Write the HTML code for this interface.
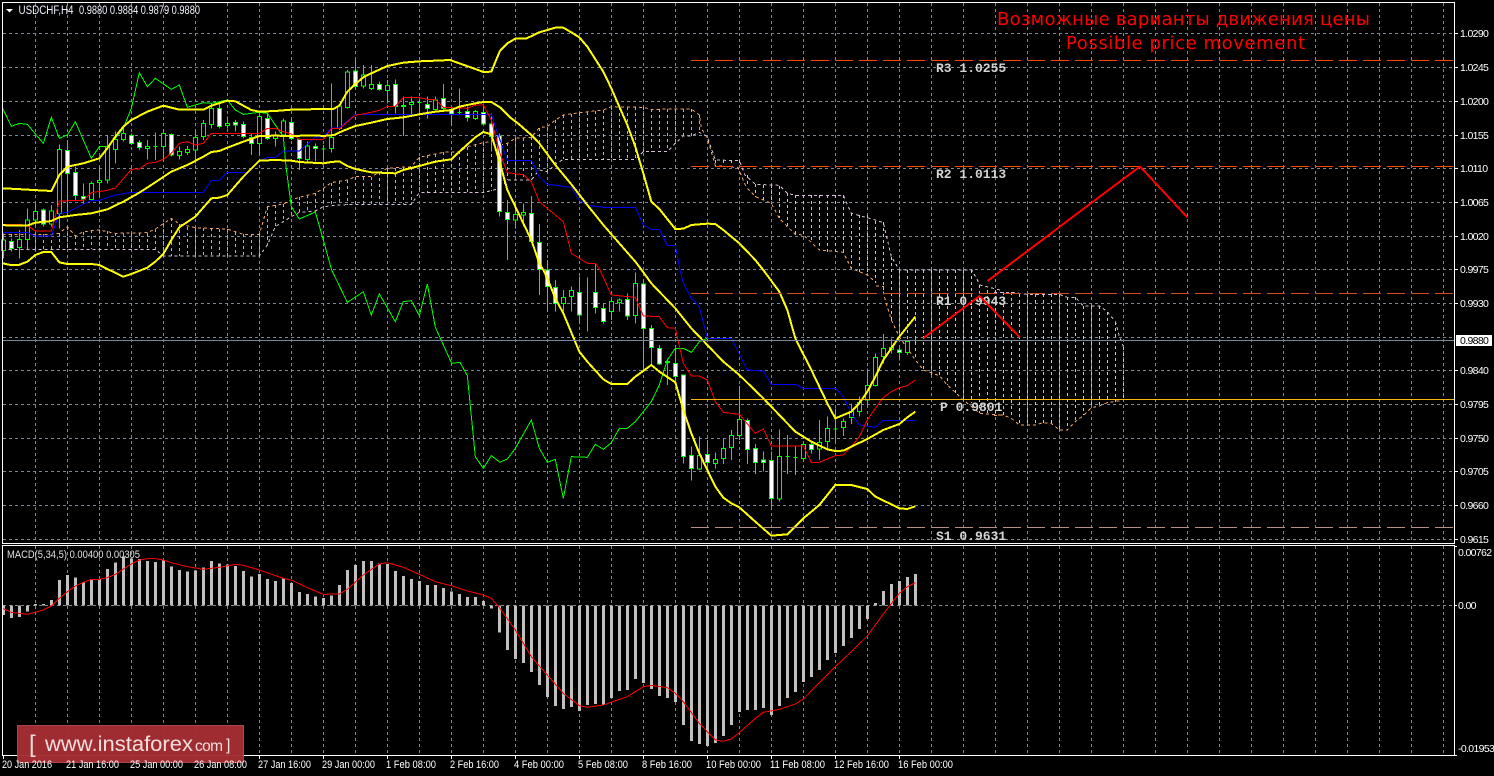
<!DOCTYPE html>
<html><head><meta charset="utf-8"><title>USDCHF,H4</title>
<style>
html,body{margin:0;padding:0;background:#000;width:1494px;height:776px;overflow:hidden}
svg{display:block;position:absolute;left:0;top:0}
path{vector-effect:non-scaling-stroke;shape-rendering:crispEdges;fill:none}
.ax{font:10.5px "Liberation Sans",sans-serif;fill:#fff;letter-spacing:-.65px}
.dt{font:11px "Liberation Sans",sans-serif;fill:#fff}
.lv{font:bold 13px "Liberation Mono",monospace;fill:#d4d4d4}
.y{stroke:#ff0;stroke-width:2}
.r{stroke:#f00;stroke-width:1}
.b{stroke:#00f;stroke-width:1}
.g{stroke:#0f0;stroke-width:1}
.sa{stroke:#f4a460;stroke-width:1;stroke-dasharray:3 3}
.ti{stroke:#d8bfd8;stroke-width:1;stroke-dasharray:3 3}
</style></head><body>
<svg width="1494" height="776" viewBox="0 0 1494 776" xmlns="http://www.w3.org/2000/svg">
<rect width="1494" height="776" fill="#000"/>

<!-- grid -->
<path stroke="#778899" stroke-dasharray="3 3" d="M3 33.5H1454M3 67.5H1454M3 101.5H1454M3 135.5H1454M3 168.5H1454M3 202.5H1454M3 236.5H1454M3 269.5H1454M3 303.5H1454M3 337.5H1454M3 370.5H1454M3 404.5H1454M3 438.5H1454M3 471.5H1454M3 505.5H1454M3 539.5H1454"/>
<path stroke="#778899" stroke-dasharray="3 3" d="M35.5 3V543M67.5 3V543M99.5 3V543M131.5 3V543M163.5 3V543M195.5 3V543M227.5 3V543M259.5 3V543M291.5 3V543M323.5 3V543M355.5 3V543M387.5 3V543M419.5 3V543M451.5 3V543M483.5 3V543M515.5 3V543M547.5 3V543M579.5 3V543M611.5 3V543M643.5 3V543M675.5 3V543M707.5 3V543M739.5 3V543M771.5 3V543M803.5 3V543M835.5 3V543M867.5 3V543M899.5 3V543M931.5 3V543M963.5 3V543M995.5 3V543M1027.5 3V543M1059.5 3V543M1091.5 3V543M1123.5 3V543M1155.5 3V543M1187.5 3V543M1219.5 3V543M1251.5 3V543M1283.5 3V543M1315.5 3V543M1347.5 3V543M1379.5 3V543M1411.5 3V543M1443.5 3V543"/>
<path stroke="#778899" stroke-dasharray="3 3" d="M35.5 546V755M67.5 546V755M99.5 546V755M131.5 546V755M163.5 546V755M195.5 546V755M227.5 546V755M259.5 546V755M291.5 546V755M323.5 546V755M355.5 546V755M387.5 546V755M419.5 546V755M451.5 546V755M483.5 546V755M515.5 546V755M547.5 546V755M579.5 546V755M611.5 546V755M643.5 546V755M675.5 546V755M707.5 546V755M739.5 546V755M771.5 546V755M803.5 546V755M835.5 546V755M867.5 546V755M899.5 546V755M931.5 546V755M963.5 546V755M995.5 546V755M1027.5 546V755M1059.5 546V755M1091.5 546V755M1123.5 546V755M1155.5 546V755M1187.5 546V755M1219.5 546V755M1251.5 546V755M1283.5 546V755M1315.5 546V755M1347.5 546V755M1379.5 546V755M1411.5 546V755M1443.5 546V755"/>
<path stroke="#778899" stroke-dasharray="3 3" d="M3 605.5H1454"/>

<!-- cloud hatching, first part -->
<path class="sa" d="M3.5 234V249M11.5 234V249M19.5 234V249M27.5 234V249M35.5 234V249M43.5 234V249M51.5 234V249M59.5 233V249M67.5 227V249M75.5 236V249M83.5 232V249M91.5 230V249M99.5 230V249M107.5 231V249M115.5 233V249M123.5 233V249M131.5 233V249M139.5 233V249M147.5 233V249M155.5 229V249M163.5 223V256M171.5 218V256M179.5 224V256M187.5 227V256M195.5 228V256M203.5 228V256M211.5 228V256M219.5 229V256M227.5 229V256M235.5 232V256M243.5 234V256M251.5 234V256M259.5 234V256M267.5 207V245M275.5 205V227M283.5 204V222M291.5 200V217M299.5 197V212M307.5 195V212M315.5 193V211M323.5 188V207M331.5 183V206M339.5 181V205M347.5 180V205M355.5 177V204M363.5 177V204M371.5 177V204M379.5 172V204M387.5 168V204M395.5 168V204M403.5 167V204M411.5 167V204M419.5 157V193M427.5 155V193M435.5 154V193M443.5 152V193M451.5 152V193M459.5 151V193M467.5 147V193M475.5 144V193M483.5 143V193M491.5 142V191M499.5 145V188M507.5 143V180M515.5 138V180M523.5 138V180M531.5 137V180M539.5 128V170M547.5 127V172M555.5 120V163M563.5 115V159M571.5 114V159M579.5 113V159M587.5 112V159M595.5 111V159M603.5 110V159M611.5 107V159M619.5 107V159M627.5 107V159M635.5 107V159M643.5 107V152M651.5 109V152M659.5 109V152M667.5 109V151M675.5 109V143M683.5 109V136M691.5 109V136M699.5 115V132"/>
<!-- cloud hatching, second part -->
<path class="ti" d="M715.5 160V166M723.5 160V166M731.5 160V167M739.5 160V167M747.5 175V187M755.5 184V197M763.5 185V200M771.5 185V204M779.5 186V218M787.5 193V227M795.5 195V234M803.5 195V235M811.5 195V243M819.5 195V250M827.5 195V252M835.5 195V252M843.5 195V252M851.5 213V268M859.5 215V272M867.5 215V275M875.5 221V283M883.5 222V290M891.5 257V320M899.5 270V337M907.5 270V347M915.5 270V360M923.5 270V370M931.5 270V375M939.5 270V376M947.5 270V385M955.5 270V393M963.5 270V400M971.5 270V403M979.5 285V413M987.5 290V414M995.5 290V415M1003.5 292V415M1011.5 292V418M1019.5 294V425M1027.5 294V425M1035.5 294V425M1043.5 294V423M1051.5 294V423M1059.5 294V430M1067.5 297V430M1075.5 297V422M1083.5 306V415M1091.5 306V408M1099.5 306V406M1107.5 312V403M1115.5 322V402M1123.5 347V400"/>
<!-- cloud edges -->
<g transform="scale(.33333)">
<path class="sa" d="M8 703L154 703L178 700L202 680L226 708L250 695L298 690L346 700L442 698L466 687L514 655L538 672L586 683L634 685L682 687L730 703L778 703L802 620L850 612L874 600L898 592L946 580L970 565L994 548L1042 540L1066 530L1114 530L1162 505L1186 503L1234 500L1258 472L1306 462L1330 457L1378 455L1402 440L1450 428L1474 425L1500 435"/>
<path class="ti" d="M8 748L466 748L490 768L778 768L802 735L826 680L874 650L898 637L946 633L970 620L1018 615L1066 613L1234 613L1258 578L1450 578L1500 565"/>
</g>
<g transform="translate(500,0) scale(.33333)">
<path class="sa" d="M0 435L22 430L46 415L94 412L118 383L142 380L166 360L190 345L238 338L310 330L334 320L430 322L454 328L574 327L598 345L604 385L622 415L646 497L714 503L738 560L766 590L814 610L838 655L862 680L886 703L910 705L958 750L1030 757L1054 805L1102 825L1128 848"/>
<path class="ti" d="M0 565L22 540L94 540L118 510L142 515L170 490L190 478L406 478L430 455L502 455L526 430L550 408L574 408L598 397L622 410L646 480L718 482L735 525L766 553L838 556L862 580L886 586L1030 586L1054 640L1126 660L1150 668L1174 770L1198 810L1416 810L1440 855L1500 870"/>
</g>
<g transform="translate(500,270) scale(.33333)">
<path class="sa" d="M1128 48L1150 50L1150 70L1174 150L1198 200L1246 270L1270 300L1318 317L1342 345L1390 390L1440 430L1500 435"/>
</g>
<g transform="translate(994,270) scale(.33333)">
<path class="sa" d="M0 437L28 435L52 445L76 465L124 465L148 458L172 460L196 480L220 480L244 455L268 437L292 413L316 408L340 398L378 392"/>
<path class="ti" d="M0 67L52 67L100 73L196 73L220 82L244 82L268 108L316 108L340 125L364 155L375 195L388 230"/>
</g>

<!-- candles, first part -->
<g transform="scale(1,.33333)">
<path stroke="#0f0" d="M3.5 700V775M11.5 715V755M19.5 690V775M27.5 625V740M35.5 610V680M43.5 625V680M51.5 615V680M59.5 433V685M67.5 420V640M75.5 500V600M83.5 550V610M91.5 545V600M99.5 500V590M107.5 405V550M115.5 395V490M123.5 375V425M131.5 400V435M139.5 420V450M147.5 420V478M155.5 398V480M163.5 390V480M171.5 400V470M179.5 440V478M187.5 438V465M195.5 395V490M203.5 360V420M211.5 310V385M219.5 310V385M227.5 350V385M235.5 360V395M243.5 365V415M251.5 400V465M259.5 340V465M267.5 340V420M275.5 395V440M283.5 355V420M291.5 355V420M299.5 415V510M307.5 425V485M315.5 430V485M323.5 435V480M331.5 250V458M339.5 318V390M347.5 210V325M355.5 180V265M363.5 195V265M371.5 195V270M379.5 245V272M387.5 240V310M395.5 238V340M403.5 290V408M411.5 290V350M419.5 295V340M427.5 290V355M435.5 290V330M443.5 252V330M451.5 320V375M459.5 265V345M467.5 320V365M475.5 330V360M483.5 310V375M491.5 340V455M499.5 400V650M507.5 600V780M515.5 610V685M523.5 610V680M531.5 588V725M539.5 672V885M547.5 780V933"/>
<path fill="#000" stroke="#0f0" style="fill:#000" d="M1.5 720h4V752h-4zM17.5 718h4V743h-4zM25.5 660h4V718h-4zM33.5 635h4V660h-4zM49.5 633h4V672h-4zM57.5 448h4V640h-4zM89.5 550h4V598h-4zM97.5 541h4V548h-4zM105.5 440h4V540h-4zM113.5 418h4V448h-4zM121.5 400h4V418h-4zM145.5 440h4V445h-4zM153.5 440h4V440h-4zM161.5 400h4V440h-4zM177.5 454h4V467h-4zM185.5 448h4V458h-4zM193.5 412h4V450h-4zM201.5 370h4V410h-4zM209.5 325h4V373h-4zM225.5 370h4V376h-4zM257.5 350h4V430h-4zM273.5 408h4V415h-4zM281.5 363h4V405h-4zM305.5 438h4V478h-4zM321.5 447h4V447h-4zM329.5 412h4V445h-4zM337.5 318h4V385h-4zM345.5 216h4V322h-4zM361.5 225h4V258h-4zM369.5 253h4V266h-4zM385.5 256h4V272h-4zM401.5 316h4V320h-4zM409.5 307h4V314h-4zM417.5 308h4V308h-4zM433.5 300h4V328h-4zM457.5 338h4V338h-4zM473.5 335h4V356h-4zM513.5 643h4V660h-4zM521.5 637h4V645h-4z"/>
<path stroke="#0f0" style="fill:#fff" d="M9.5 725h4V745h-4zM41.5 630h4V672h-4zM65.5 452h4V520h-4zM73.5 517h4V587h-4zM81.5 590h4V597h-4zM129.5 406h4V430h-4zM137.5 427h4V442h-4zM169.5 403h4V465h-4zM217.5 325h4V380h-4zM233.5 368h4V375h-4zM241.5 373h4V410h-4zM249.5 412h4V430h-4zM265.5 355h4V415h-4zM289.5 367h4V415h-4zM297.5 418h4V475h-4zM313.5 440h4V445h-4zM353.5 213h4V260h-4zM377.5 253h4V268h-4zM393.5 253h4V320h-4zM425.5 313h4V325h-4zM441.5 295h4V325h-4zM449.5 328h4V342h-4zM465.5 335h4V352h-4zM481.5 338h4V372h-4zM489.5 372h4V410h-4zM497.5 408h4V635h-4zM505.5 638h4V658h-4zM529.5 640h4V725h-4zM537.5 727h4V808h-4zM545.5 810h4V860h-4z"/>
</g>
<!-- candles, second part -->
<g transform="translate(0,270) scale(1,.33333)">
<path stroke="#0f0" d="M555.5 30V125M563.5 60V125M571.5 50V125M579.5 20V160M587.5 22V185M595.5 -20V130M603.5 100V160M611.5 90V150M619.5 85V125M627.5 70V150M635.5 8V160M643.5 30V300M651.5 165V285M659.5 225V285M667.5 265V345M675.5 235V345M683.5 315V580M691.5 530V632M699.5 500V600M707.5 510V595M715.5 548V595M723.5 505V582M731.5 480V570M739.5 348V510M747.5 445V582M755.5 522V612M763.5 545V605M771.5 545V712M779.5 478V695M787.5 495V612M795.5 530V615M803.5 520V570M811.5 518V550M819.5 450V570M827.5 440V540M835.5 415V515M843.5 445V498M851.5 400V462M859.5 380V440M867.5 295V410M875.5 250V350M883.5 192V280M891.5 205V250M899.5 225V272M907.5 210V255M915.5 205V216"/>
<path stroke="#0f0" style="fill:#000" d="M561.5 82h4V100h-4zM569.5 62h4V80h-4zM609.5 95h4V125h-4zM617.5 90h4V98h-4zM633.5 40h4V137h-4zM665.5 275h4V278h-4zM697.5 556h4V597h-4zM713.5 568h4V581h-4zM721.5 535h4V566h-4zM729.5 497h4V532h-4zM737.5 448h4V497h-4zM777.5 560h4V687h-4zM785.5 560h4V560h-4zM793.5 562h4V562h-4zM801.5 524h4V566h-4zM817.5 518h4V537h-4zM825.5 476h4V514h-4zM833.5 477h4V477h-4zM841.5 455h4V472h-4zM849.5 425h4V442h-4zM857.5 397h4V425h-4zM865.5 347h4V390h-4zM873.5 262h4V347h-4zM881.5 235h4V260h-4zM889.5 232h4V238h-4zM905.5 214h4V247h-4zM913.5 211h4V211h-4z"/>
<path stroke="#0f0" style="fill:#fff" d="M553.5 52h4V100h-4zM577.5 67h4V135h-4zM593.5 67h4V112h-4zM601.5 115h4V155h-4zM625.5 88h4V138h-4zM641.5 42h4V175h-4zM649.5 175h4V232h-4zM657.5 235h4V282h-4zM673.5 280h4V320h-4zM681.5 315h4V560h-4zM689.5 556h4V596h-4zM705.5 553h4V578h-4zM745.5 452h4V538h-4zM753.5 535h4V578h-4zM761.5 570h4V577h-4zM769.5 572h4V685h-4zM809.5 524h4V538h-4zM897.5 240h4V247h-4z"/>
</g>

<!-- chikou, kijun, tenkan, bollinger -->
<g transform="scale(.33333)">
<path class="g" d="M8 325L34 379L58 370L82 373L130 430L154 352L178 415L202 405L226 365L274 475L298 440L322 440L346 415L370 385L394 325L418 218L442 260L466 235L514 268L538 255L562 322L610 308L634 310L682 300L706 330L730 343L778 337L802 340L826 375L850 410L858 500L874 620L898 657L946 636L970 720L995 810L1042 907L1090 875L1114 945L1138 882L1186 965L1210 905L1234 902L1258 947L1282 852L1306 982L1355 1090L1380 1087L1402 1127L1426 1370L1450 1405L1474 1367L1500 1387"/>
<path class="b" d="M8 697L82 697L106 708L154 708L178 640L202 637L274 601L298 601L346 585L394 577L610 577L634 541L658 541L682 517L742 517L778 483L802 472L826 472L850 453L898 453L946 411L970 411L994 384L1018 384L1066 343L1474 343L1500 420"/>
<path class="r" d="M8 673L56 673L82 676L106 693L154 693L178 603L250 601L274 578L322 571L346 564L394 508L418 507L442 490L466 487L490 478L514 460L538 430L562 425L586 435L610 430L634 400L778 400L802 385L826 385L850 395L874 402L898 418L970 418L994 386L1020 385L1066 345L1090 342L1138 331L1162 319L1186 319L1210 293L1258 293L1282 298L1306 299L1330 322L1402 325L1426 315L1450 315L1474 360L1500 460"/>
<path class="y" d="M8 565L50 567L100 570L154 573L178 525L202 500L250 490L298 475L322 445L346 410L370 380L394 360L442 335L490 317L538 329L610 329L634 317L682 302L706 304L730 317L754 330L778 335L826 333L874 329L970 327L1000 327L1018 317L1042 275L1066 252L1090 232L1114 220L1162 198L1210 188L1258 184L1306 182L1350 180L1378 190L1426 207L1450 216L1474 215L1500 152"/>
<path class="y" d="M8 675L30 677L82 677L106 668L154 663L178 652L226 645L274 640L322 628L370 605L418 578L466 547L514 515L562 495L610 470L634 456L658 453L682 443L730 425L778 408L826 407L874 408L946 406L970 408L1002 405L1030 392L1066 378L1114 368L1162 357L1210 352L1258 343L1306 335L1354 330L1378 320L1426 310L1450 306L1474 306L1500 322"/>
<path class="y" d="M8 790L32 795L56 795L82 785L106 765L130 756L154 756L178 787L202 792L274 792L298 795L322 807L370 830L394 822L442 803L466 785L490 762L514 720L538 682L586 650L634 595L658 593L682 585L730 530L778 482L826 480L874 482L898 486L970 490L994 486L1018 484L1042 498L1066 507L1114 517L1186 520L1210 510L1258 498L1306 485L1354 478L1378 455L1426 412L1450 396L1474 403L1500 490"/>
</g>
<g transform="translate(500,0) scale(.33333)">
<path class="b" d="M0 420L22 481L94 481L118 530L142 553L214 562L238 600L262 616L310 622L406 622L430 675L454 688L478 688L502 736L526 736L540 810"/>
<path class="r" d="M0 460L22 518L70 524L94 545L118 605L190 665L214 760L262 790L286 790L300 810"/>
<path class="y" d="M0 152L22 130L46 116L78 116L118 97L166 83L190 83L214 97L238 112L262 140L310 215L334 265L358 320L382 375L406 440L430 520L454 605L478 627L526 687L550 686L574 675L622 671L646 672L670 690L718 730L766 780L790 810"/>
<path class="y" d="M0 322L30 352L54 370L94 405L118 430L166 495L214 553L262 615L310 675L358 730L406 785L425 810"/>
<path class="y" d="M0 490L22 570L46 620L94 720L118 790L130 810"/>
</g>
<g transform="translate(500,270) scale(.33333)">
<path class="g" d="M-1 577L22 567L46 535L94 450L118 535L142 577L166 568L190 685L214 560L262 562L286 523L310 538L334 518L358 475L382 475L406 455L454 395L478 345L502 270L526 235L550 235L574 247L598 215L622 205"/>
<path class="b" d="M540 0L550 40L574 85L598 110L622 205L694 205L742 300L790 303L814 343L886 343L910 355L1006 355L1030 380L1054 430L1078 465L1126 472L1150 451L1246 451"/>
<path class="r" d="M300 0L334 75L406 82L430 138L478 140L502 173L526 175L550 280L574 318L598 318L622 330L646 395L670 427L718 433L766 490L790 477L814 528L910 528L934 577L958 577L1006 557L1030 555L1054 530L1078 500L1102 450L1126 415L1150 382L1174 365L1198 353L1222 347L1246 330"/>
<path class="y" d="M790 0L838 65L862 120L886 205L934 300L982 400L1006 445L1030 435L1054 425L1078 400L1102 365L1126 320L1150 270L1174 235L1198 200L1222 170L1246 140"/>
<path class="y" d="M425 0L454 40L502 90L526 115L574 175L622 225L670 275L718 315L790 385L838 435L886 485L934 515L982 538L1006 543L1030 542L1054 530L1102 507L1150 480L1198 462L1222 442L1246 425"/>
<path class="y" d="M130 0L142 25L166 85L190 130L238 245L262 275L310 328L334 342L382 342L406 320L454 285L478 305L526 337L550 420L574 490L598 550L622 600L646 650L670 683L694 700L718 712L766 755L814 797L862 793L910 745L958 705L1006 645L1054 645L1102 657L1126 680L1174 703L1198 715L1222 717L1246 709"/>
</g>

<!-- current price line and levels -->
<path stroke="#778899" d="M3 340.5H1454"/>
<path stroke="#ff4500" stroke-dasharray="18 6" d="M691 60.5H1454M691 166.5H1454"/>
<path stroke="#d2491f" stroke-dasharray="18 6" d="M691 293.5H1454"/>
<path stroke="#b88f85" stroke-dasharray="18 6" d="M691 527.5H1454"/>
<path stroke="#f7b90f" d="M691 399.5H1454"/>
<text class="lv" x="936" y="72">R3 1.0255</text>
<text class="lv" x="936" y="178">R2 1.0113</text>
<text class="lv" x="936" y="305">R1 0.9943</text>
<text class="lv" x="940" y="411">P 0.9801</text>
<text class="lv" x="936" y="540">S1 0.9631</text>

<!-- forecast lines -->
<path stroke="#f00" stroke-width="2" d="M923.5 338L979.5 296L1020 337.5"/>
<path stroke="#f00" stroke-width="2" d="M987.5 281L1140 166.5L1187.5 217.5"/>

<!-- macd -->
<g transform="translate(0,540) scale(1,.33333)">
<path stroke="#c0c0c0" stroke-width="3" d="M3.5 196V225M11.5 196V234M19.5 196V231M27.5 196V214M35.5 196V192M43.5 196V192M51.5 196V180M59.5 196V120M67.5 196V105M75.5 196V113M83.5 196V127M91.5 196V117M99.5 196V118M107.5 196V87M115.5 196V67M123.5 196V50M131.5 196V55M139.5 196V57M147.5 196V63M155.5 196V66M163.5 196V62M171.5 196V80M179.5 196V90M187.5 196V95M195.5 196V92M203.5 196V82M211.5 196V63M219.5 196V70M227.5 196V73M235.5 196V78M243.5 196V93M251.5 196V110M259.5 196V102M267.5 196V117M275.5 196V123M283.5 196V115M291.5 196V129M299.5 196V156M307.5 196V162M315.5 196V170M323.5 196V174M331.5 196V167M339.5 196V135M347.5 196V90M355.5 196V75M363.5 196V63M371.5 196V63M379.5 196V70M387.5 196V72M395.5 196V93M403.5 196V108M411.5 196V117M419.5 196V123M427.5 196V135M435.5 196V135M443.5 196V144M451.5 196V155M459.5 196V162M467.5 196V171M475.5 196V171M483.5 196V183M491.5 196V205M499.5 196V278M507.5 196V330M515.5 196V357M523.5 196V369M531.5 196V396M539.5 196V435M547.5 196V471M555.5 196V498M563.5 196V507M571.5 196V501M579.5 196V513M587.5 196V495M595.5 196V492M603.5 196V495M611.5 196V474M619.5 196V453M627.5 196V450M635.5 196V417M643.5 196V429M651.5 196V447M659.5 196V468M667.5 196V474M675.5 196V486M683.5 196V555M691.5 196V603M699.5 196V612M707.5 196V618M715.5 196V609M723.5 196V588M731.5 196V555M739.5 196V516M747.5 196V510M755.5 196V510M763.5 196V504M771.5 196V525M779.5 196V498M787.5 196V474M795.5 196V456M803.5 196V426M811.5 196V411M819.5 196V390M827.5 196V360M835.5 196V339M843.5 196V318M851.5 196V294M859.5 196V267M867.5 196V237M875.5 196V189M883.5 196V153M891.5 196V132M899.5 196V123M907.5 196V111M915.5 196V102"/>
</g>
<g transform="translate(0,540) scale(.33333)">
<path class="r" d="M8 205L34 217L82 223L130 210L154 198L178 175L202 155L226 138L250 127L274 118L298 118L322 113L346 103L370 87L394 72L418 60L442 56L466 56L490 60L514 68L562 80L610 88L658 82L706 73L730 76L778 90L850 115L874 120L922 143L970 163L1018 162L1042 148L1090 105L1138 72L1162 68L1210 82L1258 103L1306 125L1354 137L1402 153L1450 165L1474 175L1500 205"/>
</g>
<g transform="translate(500,540) scale(.33333)">
<path class="r" d="M0 205L46 270L94 350L118 378L142 405L190 460L238 497L262 502L310 495L358 478L382 470L430 440L454 436L502 443L526 460L550 485L598 550L646 600L670 604L694 597L718 578L766 535L790 517L838 508L886 492L910 477L958 428L1006 380L1054 335L1102 288L1150 222L1198 160L1222 140L1246 128"/>
</g>

<!-- frames -->
<path stroke="#fff" d="M2.5 2.5H1454.5V543.5H2.5ZM2.5 545.5H1454.5V755.5H2.5Z"/>
<path stroke="#fff" d="M1454 33.5h4M1454 67.5h4M1454 101.5h4M1454 135.5h4M1454 168.5h4M1454 202.5h4M1454 236.5h4M1454 269.5h4M1454 303.5h4M1454 370.5h4M1454 404.5h4M1454 438.5h4M1454 471.5h4M1454 505.5h4M1454 539.5h4M1454 546.5h3M1454 605.5h3M1454 755.5h3M3.5 755v4M67.5 755v4M131.5 755v4M195.5 755v4M259.5 755v4M323.5 755v4M387.5 755v4M451.5 755v4M515.5 755v4M579.5 755v4M643.5 755v4M707.5 755v4M771.5 755v4M835.5 755v4M899.5 755v4"/>

<!-- header text -->
<polygon points="6,9 13,9 9.5,12.5" fill="#fff"/>
<text x="18.5" y="14" font-family="'Liberation Sans',sans-serif" font-size="11.5" fill="#f0f4ff" textLength="55" lengthAdjust="spacingAndGlyphs">USDCHF,H4</text>
<text x="79" y="14" font-family="'Liberation Sans',sans-serif" font-size="11.5" fill="#f0f4ff" textLength="121" lengthAdjust="spacingAndGlyphs">0.9880 0.9884 0.9879 0.9880</text>
<text x="7" y="558" font-family="'Liberation Sans',sans-serif" font-size="11" fill="#e0e0e0" textLength="133" lengthAdjust="spacingAndGlyphs">MACD(5,34,5) 0.00400 0.00305</text>

<!-- title -->
<text x="997" y="25" font-family="'DejaVu Sans',sans-serif" font-size="18" fill="#f00" textLength="373">Возможные варианты движения цены</text>
<text x="1066" y="49" font-family="'DejaVu Sans',sans-serif" font-size="18" fill="#f00" textLength="239">Possible price movement</text>

<!-- price axis -->
<text class="ax" x="1460" y="37">1.0290</text>
<text class="ax" x="1460" y="71">1.0245</text>
<text class="ax" x="1460" y="105">1.0200</text>
<text class="ax" x="1460" y="139">1.0155</text>
<text class="ax" x="1460" y="172">1.0110</text>
<text class="ax" x="1460" y="206">1.0065</text>
<text class="ax" x="1460" y="240">1.0020</text>
<text class="ax" x="1460" y="273">0.9975</text>
<text class="ax" x="1460" y="307">0.9930</text>
<rect x="1456" y="335" width="36" height="11" fill="#fff"/>
<text class="ax" x="1460" y="344" style="fill:#000">0.9880</text>
<text class="ax" x="1460" y="374">0.9840</text>
<text class="ax" x="1460" y="408">0.9795</text>
<text class="ax" x="1460" y="442">0.9750</text>
<text class="ax" x="1460" y="475">0.9705</text>
<text class="ax" x="1460" y="509">0.9660</text>
<text class="ax" x="1460" y="543">0.9615</text>
<text class="ax" x="1458" y="556">0.00762</text>
<text class="ax" x="1458" y="609">0.00</text>
<text class="ax" x="1458" y="752">-0.01953</text>

<!-- watermark -->
<rect x="17.5" y="725.5" width="226" height="37" fill="#a52e33" stroke="#b24a4e" opacity=".96"/>
<g font-family="'Liberation Sans',sans-serif" fill="#f3dede">
<text x="29" y="752" font-size="24">[</text>
<text x="45" y="751" font-size="21" textLength="148" lengthAdjust="spacingAndGlyphs">www.instaforex</text>
<text x="195" y="751" font-size="15.5" textLength="28">com</text>
<text x="226" y="750" font-size="16">]</text>
</g>

<!-- time axis -->
<text class="dt" x="2" y="768" textLength="50" lengthAdjust="spacingAndGlyphs">20 Jan 2016</text>
<text class="dt" x="66" y="768" textLength="53" lengthAdjust="spacingAndGlyphs">21 Jan 16:00</text>
<text class="dt" x="130" y="768" textLength="53" lengthAdjust="spacingAndGlyphs">25 Jan 00:00</text>
<text class="dt" x="194" y="768" textLength="53" lengthAdjust="spacingAndGlyphs">26 Jan 08:00</text>
<text class="dt" x="258" y="768" textLength="53" lengthAdjust="spacingAndGlyphs">27 Jan 16:00</text>
<text class="dt" x="322" y="768" textLength="53" lengthAdjust="spacingAndGlyphs">29 Jan 00:00</text>
<text class="dt" x="386" y="768" textLength="50" lengthAdjust="spacingAndGlyphs">1 Feb 08:00</text>
<text class="dt" x="450" y="768" textLength="49" lengthAdjust="spacingAndGlyphs">2 Feb 16:00</text>
<text class="dt" x="514" y="768" textLength="50" lengthAdjust="spacingAndGlyphs">4 Feb 00:00</text>
<text class="dt" x="578" y="768" textLength="50" lengthAdjust="spacingAndGlyphs">5 Feb 08:00</text>
<text class="dt" x="642" y="768" textLength="50" lengthAdjust="spacingAndGlyphs">8 Feb 16:00</text>
<text class="dt" x="706" y="768" textLength="55" lengthAdjust="spacingAndGlyphs">10 Feb 00:00</text>
<text class="dt" x="770" y="768" textLength="55" lengthAdjust="spacingAndGlyphs">11 Feb 08:00</text>
<text class="dt" x="834" y="768" textLength="55" lengthAdjust="spacingAndGlyphs">12 Feb 16:00</text>
<text class="dt" x="898" y="768" textLength="55" lengthAdjust="spacingAndGlyphs">16 Feb 00:00</text>
</svg>
</body></html>
